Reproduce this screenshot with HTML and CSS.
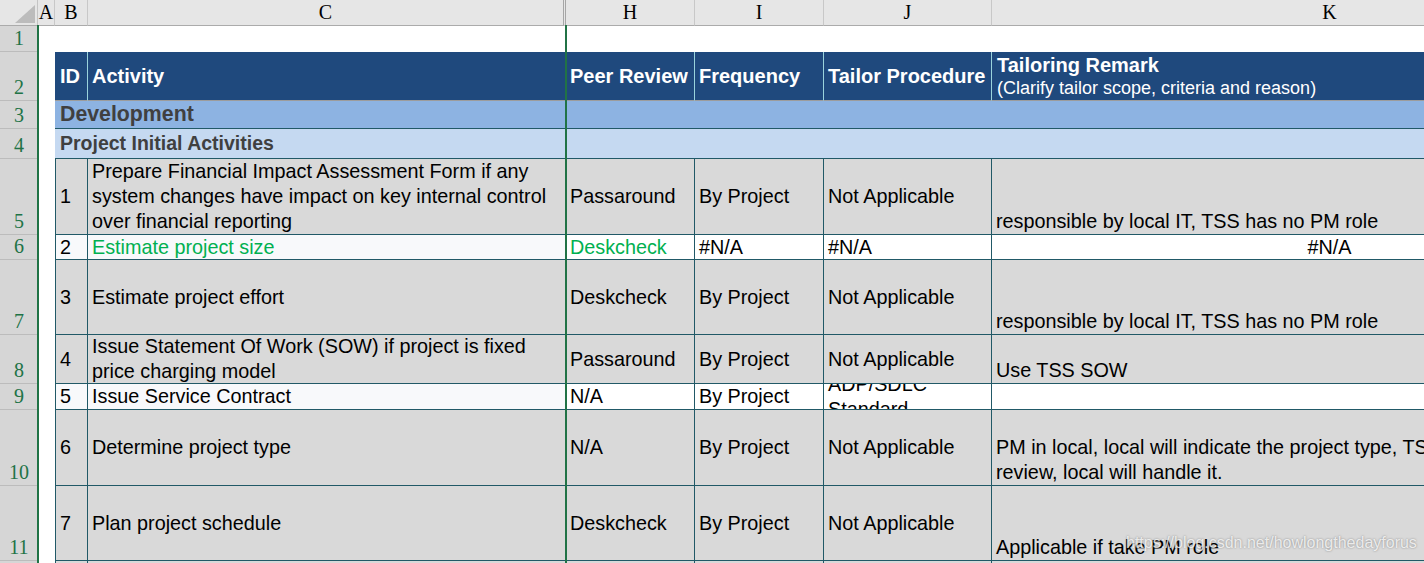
FILE: index.html
```html
<!DOCTYPE html>
<html lang="en">
<head>
  <meta charset="UTF-8" />
  <title>Tailoring Sheet</title>
  <link rel="stylesheet" href="styles.css">
</head>
<body>
  <div class="sheet">
    <!-- column letters -->
    <div class="row h26">
      <div class="corner">
        <svg width="37" height="25" viewBox="0 0 37 25"><polygon points="35,5 35,23 15,23" fill="#bcbcbc"/></svg>
      </div>
      <div class="ch">A</div>
      <div class="ch">B</div>
      <div class="ch split">C</div>
      <div class="ch">H</div>
      <div class="ch">I</div>
      <div class="ch">J</div>
      <div class="ch">K</div>
    </div>

    <div class="row h26">
      <div class="rh">1</div>
      <div class="blank wide"></div>
    </div>

    <div class="row h49">
      <div class="rh">2</div>
      <div class="blank"></div>
      <div class="hd first">ID</div>
      <div class="hd">Activity</div>
      <div class="hd">Peer Review</div>
      <div class="hd">Frequency</div>
      <div class="hd">Tailor Procedure</div>
      <div class="hd two">
        <div class="hd-title">Tailoring Remark</div>
        <div class="hd-sub">(Clarify tailor scope, criteria and reason)</div>
      </div>
    </div>

    <div class="row h28">
      <div class="rh">3</div>
      <div class="blank"></div>
      <div class="sec">Development</div>
    </div>

    <div class="row h30">
      <div class="rh">4</div>
      <div class="blank"></div>
      <div class="sec sub">Project Initial Activities</div>
    </div>

    <div class="row h76">
      <div class="rh">5</div>
      <div class="blank"></div>
      <div class="c first">1</div>
      <div class="c">Prepare Financial Impact Assessment Form if any system changes have impact on key internal control over financial reporting</div>
      <div class="c">Passaround</div>
      <div class="c">By Project</div>
      <div class="c">Not Applicable</div>
      <div class="c bottom">responsible by local IT, TSS has no PM role</div>
    </div>

    <div class="row h25 plain">
      <div class="rh">6</div>
      <div class="blank"></div>
      <div class="c first">2</div>
      <div class="c green">Estimate project size</div>
      <div class="c green">Deskcheck</div>
      <div class="c">#N/A</div>
      <div class="c">#N/A</div>
      <div class="c center">#N/A</div>
    </div>

    <div class="row h75">
      <div class="rh">7</div>
      <div class="blank"></div>
      <div class="c first">3</div>
      <div class="c">Estimate project effort</div>
      <div class="c">Deskcheck</div>
      <div class="c">By Project</div>
      <div class="c">Not Applicable</div>
      <div class="c bottom">responsible by local IT, TSS has no PM role</div>
    </div>

    <div class="row h49">
      <div class="rh">8</div>
      <div class="blank"></div>
      <div class="c first">4</div>
      <div class="c">Issue Statement Of Work (SOW) if project is fixed price charging model</div>
      <div class="c">Passaround</div>
      <div class="c">By Project</div>
      <div class="c">Not Applicable</div>
      <div class="c bottom">Use TSS SOW</div>
    </div>

    <div class="row h26 plain">
      <div class="rh">9</div>
      <div class="blank"></div>
      <div class="c first">5</div>
      <div class="c">Issue Service Contract</div>
      <div class="c">N/A</div>
      <div class="c">By Project</div>
      <div class="c"><div>ADP/SDLC<br>Standard</div></div>
      <div class="c"></div>
    </div>

    <div class="row h76">
      <div class="rh">10</div>
      <div class="blank"></div>
      <div class="c first">6</div>
      <div class="c">Determine project type</div>
      <div class="c">N/A</div>
      <div class="c">By Project</div>
      <div class="c">Not Applicable</div>
      <div class="c bottom"><div>PM in local, local will indicate the project type, TSS will not<br>review, local will handle it.</div></div>
    </div>

    <div class="row h75">
      <div class="rh">11</div>
      <div class="blank"></div>
      <div class="c first">7</div>
      <div class="c">Plan project schedule</div>
      <div class="c">Deskcheck</div>
      <div class="c">By Project</div>
      <div class="c">Not Applicable</div>
      <div class="c bottom">Applicable if take PM role</div>
    </div>

    <div class="row h30">
      <div class="rh">12</div>
      <div class="blank"></div>
      <div class="c first"></div>
      <div class="c"></div>
      <div class="c"></div>
      <div class="c"></div>
      <div class="c"></div>
      <div class="c"></div>
    </div>

    <!-- frozen pane lines -->
    <div class="freeze freeze-left"></div>
    <div class="freeze freeze-main"></div>

    <div class="watermark">https://blog.csdn.net/howlongthedayforus</div>
  </div>
</body>
</html>
```

FILE: styles.css
```css
* {
  box-sizing: border-box;
}

html, body {
  margin: 0;
  height: 100%;
  overflow: hidden;
  background: #fff;
}

body {
  font-family: "Liberation Sans", Arial, sans-serif;
  color: #000;
}

.sheet {
  position: relative;
  width: 1668px;
}

.row {
  display: grid;
  grid-template-columns: 38px 17px 33px 478px 129px 129px 168px 676px;
}

.h25 { height: 25px; }
.h26 { height: 26px; }
.h28 { height: 28px; }
.h30 { height: 30px; }
.h49 { height: 49px; }
.h75 { height: 75px; }
.h76 { height: 76px; }

/* sheet headers */
.corner {
  background: #e6e6e6;
  border-right: 1px solid #c4c4c4;
  border-bottom: 1px solid #ababab;
  display: flex;
}

.ch {
  background: #e6e6e6;
  border-right: 1px solid #c8c8c8;
  border-bottom: 1px solid #ababab;
  font-family: "Liberation Serif", "DejaVu Serif", serif;
  font-size: 20px;
  display: flex;
  align-items: center;
  justify-content: center;
}

.ch.split {
  border-right: 3px double #a6a6a6;
}

.rh {
  background: #d6d6d6;
  border-bottom: 1px solid #bcbcbc;
  color: #217346;
  font-family: "Liberation Serif", "DejaVu Serif", serif;
  font-size: 20px;
  line-height: 25px;
  display: flex;
  align-items: flex-end;
  justify-content: center;
  overflow: hidden;
}

.blank {
  background: #fff;
}

.blank.wide {
  grid-column: 2 / -1;
}

/* table header */
.hd {
  background: #1f497d;
  color: #fff;
  font-weight: bold;
  font-size: 20px;
  border-right: 1px solid #9ad3dc;
  border-bottom: 1px solid #9c9c9c;
  padding: 0 4px;
  display: flex;
  align-items: center;
  white-space: nowrap;
  overflow: hidden;
}

.hd.first {
  padding-left: 5px;
}

.hd.two {
  flex-direction: column;
  align-items: flex-start;
  justify-content: flex-end;
  padding-left: 5px;
  border-right: none;
}

.hd-title {
  line-height: 24px;
}

.hd-sub {
  font-weight: normal;
  font-size: 18px;
  line-height: 23px;
}

/* section rows */
.sec {
  grid-column: 3 / -1;
  background: #8db3e2;
  color: #404040;
  font-weight: bold;
  font-size: 21.3px;
  padding-left: 5px;
  border-bottom: 1px solid #215967;
  display: flex;
  align-items: center;
}

.sec.sub {
  background: #c5d9f1;
  font-size: 19.5px;
}

/* data cells */
.c {
  background: #d9d9d9;
  border-right: 1px solid #215967;
  border-bottom: 1px solid #215967;
  padding: 0 4px;
  font-size: 19.8px;
  line-height: 25px;
  display: flex;
  align-items: center;
  overflow: hidden;
}

.c.first {
  border-left: 1px solid #215967;
}

.c.bottom {
  align-items: flex-end;
}

.c.center {
  justify-content: center;
}

.c.green {
  color: #00b050;
}

.plain .c {
  background: #fff;
}

.plain .c:nth-child(3),
.plain .c:nth-child(4) {
  background: #f8f9fb;
}

/* frozen panes */
.freeze {
  position: absolute;
  top: 25px;
  bottom: -40px;
  width: 2px;
  background: #217346;
}

.freeze-left {
  left: 37px;
}

.freeze-main {
  left: 565px;
}

.watermark {
  position: absolute;
  left: 1126px;
  top: 533px;
  font-size: 16px;
  line-height: 20px;
  color: rgba(255, 255, 255, 0.8);
  text-shadow: 0 0 2px rgba(70, 70, 70, 0.6);
  white-space: nowrap;
}
```
